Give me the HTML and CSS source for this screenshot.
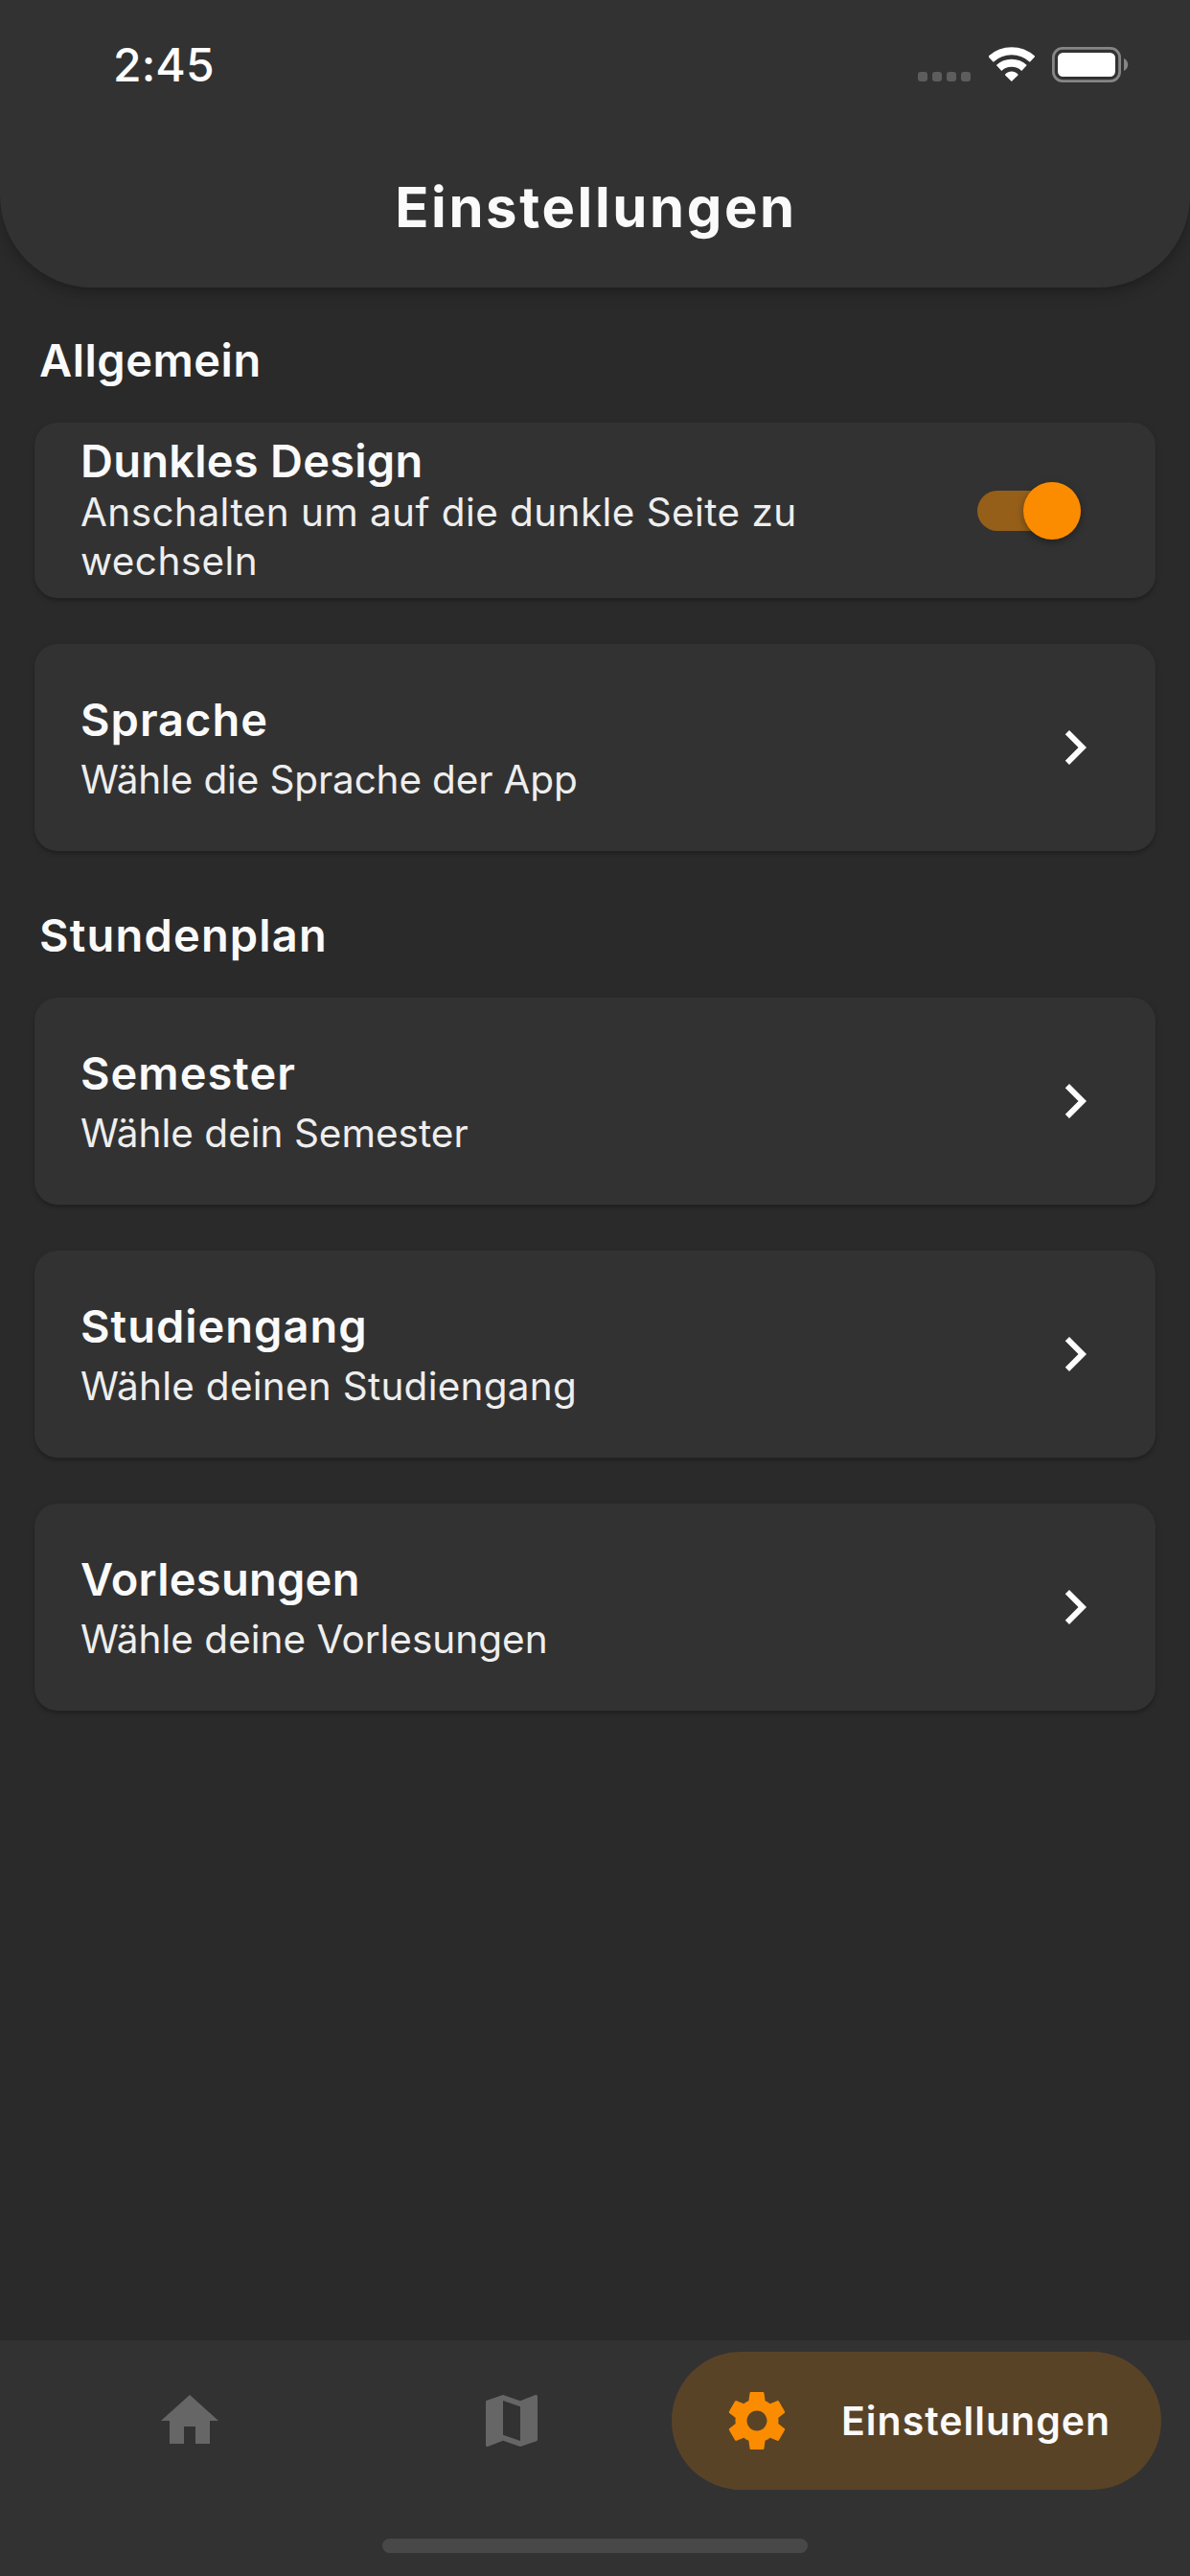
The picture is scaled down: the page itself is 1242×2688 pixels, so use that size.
FILE: index.html
```html
<!DOCTYPE html>
<html lang="de">
<head>
<meta charset="utf-8">
<title>Einstellungen</title>
<link rel="stylesheet" href="styles.css">
</head>
<body>
<div class="app">
  <header class="header">
    <div class="status">
      <span class="time">2:45</span>
      <svg class="cellular" width="55" height="37" viewBox="0 0 55 37" fill="#5d5d5d"><rect y="26" width="10" height="10" rx="3"/><rect x="15" y="26" width="10" height="10" rx="3"/><rect x="30" y="26" width="10" height="10" rx="3"/><rect x="45" y="26" width="10" height="10" rx="3"/></svg>
      <svg class="wifi" width="48" height="37" viewBox="0 0 48 37"><g fill="none" stroke="#fff" stroke-width="8"><path d="M2 12.800A32 32 0 0 1 45.600 12.800"/><path d="M10.600 22A19.200 19.200 0 0 1 37 22"/></g><path d="M17.400 29.800a1 1 0 0 1 0-1.600C21 24.600 26.600 24.600 30.200 28.200a1 1 0 0 1 0 1.600L23.800 36z" fill="#fff"/></svg>
      <svg class="battery" width="80" height="37" viewBox="0 0 80 37"><rect x="1.400" y="1.400" width="69.200" height="34.200" rx="9.600" fill="none" stroke="#868686" stroke-width="2.800"/><rect x="6" y="6" width="60" height="25" rx="5.500" fill="#fff"/><path d="M75 12c5.600 2.300 5.600 10.700 0 13z" fill="#868686"/></svg>
    </div>
    <h1 class="title">Einstellungen</h1>
  </header>

  <main class="content">
    <h2 class="section">Allgemein</h2>
    <div class="card card-switch">
      <div class="text">
        <div class="name tight">Dunkles Design</div>
        <div class="hint wide">Anschalten um auf die dunkle Seite zu<br>wechseln</div>
      </div>
      <div class="switch"><div class="thumb"></div></div>
    </div>
    <div class="card">
      <div class="text">
        <div class="name">Sprache</div>
        <div class="hint narrow">Wähle die Sprache der App</div>
      </div>
      <svg class="icon chevron" viewBox="0 0 24 24"><path d="M8.590 16.590L13.170 12 8.590 7.410 10 6l6 6-6 6z"/></svg>
    </div>

    <h2 class="section section-next">Stundenplan</h2>
    <div class="card">
      <div class="text">
        <div class="name">Semester</div>
        <div class="hint">Wähle dein Semester</div>
      </div>
      <svg class="icon chevron" viewBox="0 0 24 24"><path d="M8.590 16.590L13.170 12 8.590 7.410 10 6l6 6-6 6z"/></svg>
    </div>
    <div class="card">
      <div class="text">
        <div class="name">Studiengang</div>
        <div class="hint loose">Wähle deinen Studiengang</div>
      </div>
      <svg class="icon chevron" viewBox="0 0 24 24"><path d="M8.590 16.590L13.170 12 8.590 7.410 10 6l6 6-6 6z"/></svg>
    </div>
    <div class="card">
      <div class="text">
        <div class="name tight">Vorlesungen</div>
        <div class="hint">Wähle deine Vorlesungen</div>
      </div>
      <svg class="icon chevron" viewBox="0 0 24 24"><path d="M8.590 16.590L13.170 12 8.590 7.410 10 6l6 6-6 6z"/></svg>
    </div>
  </main>

  <footer class="footer">
    <nav class="tabs">
      <svg class="icon home" viewBox="0 0 24 24"><path d="M10 20v-6h4v6h5v-8h3L12 3 2 12h3v8z"/></svg>
      <svg class="icon map" viewBox="0 0 24 24"><path d="M20.500 3l-.160.030L15 5.100 9 3 3.360 4.900c-.210.070-.360.250-.360.480V20.500c0 .280.220.500.500.500l.160-.030L9 18.900l6 2.100 5.640-1.900c.210-.070.360-.250.360-.480V3.500c0-.280-.220-.500-.500-.500zM15 19l-6-2.110V5l6 2.110V19z"/></svg>
      <div class="pill">
        <svg class="icon gear" viewBox="0 0 24 24"><path d="M19.430 12.980c.040-.320.070-.640.070-.980s-.030-.660-.070-.980l2.110-1.650c.190-.150.240-.420.120-.640l-2-3.460c-.120-.220-.390-.300-.610-.220l-2.490 1c-.520-.400-1.080-.730-1.690-.980l-.380-2.650C14.460 2.180 14.250 2 14 2h-4c-.250 0-.460.180-.490.420l-.380 2.650c-.610.250-1.170.590-1.690.980l-2.490-1c-.230-.090-.490 0-.610.220l-2 3.460c-.130.220-.070.490.120.640l2.110 1.650c-.040.320-.070.650-.070.980s.030.660.070.980l-2.110 1.650c-.190.150-.240.420-.120.640l2 3.460c.120.220.390.300.610.220l2.490-1c.520.400 1.080.730 1.690.980l.380 2.650c.030.240.240.420.490.420h4c.250 0 .460-.180.490-.420l.380-2.650c.610-.250 1.170-.590 1.690-.980l2.490 1c.230.090.490 0 .610-.220l2-3.460c.120-.220.070-.490-.120-.640l-2.110-1.650zM12 15.500c-1.930 0-3.500-1.570-3.500-3.500s1.570-3.500 3.500-3.500 3.500 1.570 3.500 3.500-1.570 3.500-3.500 3.500z"/></svg>
        <span class="pill-label">Einstellungen</span>
      </div>
    </nav>
    <div class="home-indicator"></div>
  </footer>
</div>
</body>
</html>
```
FILE: styles.css
```css
* { box-sizing: border-box; }
body {
  margin: 0;
  background: #2a2a2a;
  color: #fafafa;
  font-family: Inter, Roboto, sans-serif;
}
h1, h2 { margin: 0; }
svg { display: block; flex: none; }
.app {
  display: flex;
  flex-direction: column;
  width: 1242px;
  height: 2688px;
  overflow: hidden;
}

/* Header */
.header {
  height: 300px;
  background: #323232;
  border-radius: 0 0 96px 96px;
  box-shadow: 0 6px 12px -3px rgba(0, 0, 0, .2), 0 8px 16px rgba(0, 0, 0, .1);
}
.status {
  display: flex;
  align-items: center;
  height: 98px;
  padding: 37px 64px 0 118px;
}
.time {
  flex: 1;
  color: #fff;
  font-size: 48px;
  font-weight: 500;
  line-height: 60px;
  letter-spacing: .1px;
}
.wifi { margin-left: 19px; }
.battery { margin-left: 18px; }
.title {
  margin-top: 82px;
  padding-left: 2px;
  font-size: 58px;
  font-weight: 700;
  line-height: 72px;
  letter-spacing: 2.6px;
  text-align: center;
}

/* Settings list */
.content {
  flex: 1;
  padding: 46px 36px 0;
}
.section {
  margin-bottom: 35px;
  padding-left: 5px;
  font-size: 47px;
  font-weight: 600;
  line-height: 60px;
  letter-spacing: .5px;
}
.section-next {
  margin-top: 58px;
  letter-spacing: 1.18px;
}
.card {
  display: flex;
  align-items: center;
  height: 216px;
  padding: 0 48px;
  background: #323232;
  border-radius: 24px;
  box-shadow: 0 3px 3px rgba(0, 0, 0, .16), 0 2px 6px rgba(0, 0, 0, .1);
}
.card + .card { margin-top: 48px; }
.card-switch { height: 183px; }
.text {
  flex: 1;
  padding-top: 2px;
}
.name {
  font-size: 47px;
  font-weight: 600;
  line-height: 56px;
  letter-spacing: 1px;
}
.name.tight { letter-spacing: .25px; }
.hint {
  margin-top: 9px;
  color: #eee;
  font-size: 40.5px;
  line-height: 51px;
}
.hint.wide {
  letter-spacing: .42px;
  white-space: nowrap;
}
.hint.narrow { letter-spacing: -.15px; }
.hint.loose { letter-spacing: .25px; }
.card-switch .text { padding: 0 0 2px; }
.card-switch .hint { margin-top: 0; }
.icon {
  width: 72px;
  height: 72px;
  fill: #666;
}
.chevron { fill: #fff; }
.switch {
  display: flex;
  align-items: center;
  justify-content: flex-end;
  width: 108px;
  height: 42px;
  margin-right: 30px;
  border-radius: 21px;
  background: #965f19;
}
.thumb {
  width: 60px;
  height: 60px;
  border-radius: 50%;
  background: #fb8c00;
  box-shadow: 0 3px 9px rgba(0, 0, 0, .35);
}

/* Bottom navigation */
.footer {
  height: 246px;
  padding-top: 12px;
  background: #323232;
}
.tabs {
  display: flex;
  align-items: center;
  height: 144px;
  padding: 0 30px 0 162px;
}
.map { margin-left: 264px; }
.pill {
  display: flex;
  align-items: center;
  flex: 1;
  height: 144px;
  margin-left: 131px;
  padding-left: 53px;
  border-radius: 72px;
  background: #594327;
}
.gear { fill: #fb8c00; }
.pill-label {
  margin-left: 52px;
  font-size: 41px;
  font-weight: 600;
  line-height: 50px;
  letter-spacing: 1px;
}
.home-indicator {
  width: 444px;
  height: 15px;
  margin: 51px auto 0;
  border-radius: 8px;
  background: #484848;
}
```
